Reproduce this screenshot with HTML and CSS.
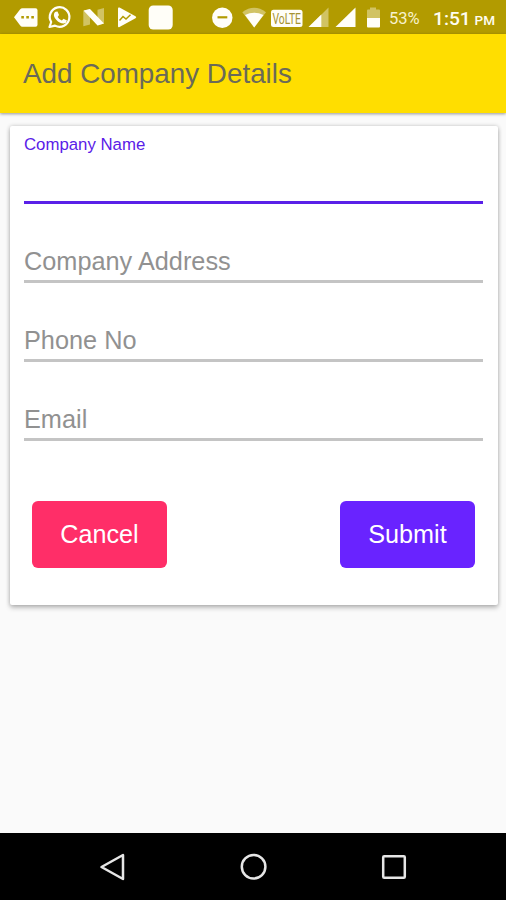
FILE: index.html
```html
<!DOCTYPE html>
<html lang="en">
<head>
<meta charset="utf-8">
<meta name="viewport" content="width=device-width, initial-scale=1">
<title>Add Company Details</title>
<link rel="stylesheet" href="styles.css">
</head>
<body>
<div class="screen">
  <div class="status">
    <svg class="notifications" width="180" height="34" viewBox="0 0 180 34" aria-hidden="true">
      <path class="solid" d="M14 17.3 20 9.5Q21 8.2 22.5 8.2H35.5Q37.5 8.2 37.5 10.2V24.8Q37.5 26.8 35.5 26.8H22.5Q21 26.8 20 25.3Z"/>
      <path class="hole" d="M21.3 16h2.6v2.6h-2.6zM26.3 16h2.6v2.6h-2.6zM31.3 16h2.6v2.6h-2.6z"/>
      <path class="line" d="M49.5 27 51.2 22A9.8 9.8 0 1 1 55 25.6Z"/>
      <path class="solid" d="M55.6 11.8 57.5 11.5 59 15.1 57.7 16.9Q59.2 19.5 61.8 20.6L63.5 18.8 67 20.6Q66.5 23.2 63.6 23.4C58.5 23.5 53 17.5 54 13.9Q54.4 12.4 55.6 11.8Z"/>
      <path class="faint" d="M83.3 11 90 9v15.5l-6.7 1.7zM97.5 9.8l6.5-1.8v15.5l-6.5 2z"/>
      <path class="solid" d="M83.5 10.5 90 9 104 23.5 97.5 25.6Z"/>
      <path class="solid" d="M118 8.5Q118 7 119.5 7.6L135.5 16.2Q137 17.3 135.5 18.3L119.5 27Q118 27.7 118 26.2Z"/>
      <path class="pulse" d="m119.5 20.5 3.5-4 3 2.5 4.5-4.3"/>
      <rect class="solid" x="148.7" y="5.5" width="24" height="24" rx="4.5"/>
    </svg>
    <svg class="signals" width="172" height="34" viewBox="210 0 172 34" aria-hidden="true">
      <circle class="solid" cx="222.3" cy="17.8" r="10.2"/>
      <path class="hole" d="M217.5 16.2h9.8v2.2h-9.8z"/>
      <path class="faint" d="M242.3 12.2Q254.2 3.5 266 12.2L254.2 27.5Z"/>
      <path class="solid" d="M245 15Q254.2 10.5 263.5 15L254.2 27.5Z"/>
      <rect class="solid" x="271" y="9.8" width="31.5" height="17.2" rx="2.5"/>
      <text class="lte" x="272.5" y="24.2" textLength="28.5" lengthAdjust="spacingAndGlyphs">VoLTE</text>
      <path class="faint" d="M328.5 7.5V27H309Z"/>
      <path class="solid" d="M321.3 14.5V27H308.5Z"/>
      <path class="solid" d="M355.5 7.5V27H335.5Z"/>
      <path class="faint" d="M367 10.5Q367 9.5 368 9.5H370V7.5H376V9.5H379Q380 9.5 380 10.5V18H367Z"/>
      <path class="solid" d="M367 18h13v8.5q0 1-1 1h-11q-1 0-1-1z"/>
    </svg>
    <span class="battery">53%</span>
    <span class="clock">1:51 <small>PM</small></span>
  </div>
  <header class="appbar"><h1>Add Company Details</h1></header>
  <main class="content">
    <form class="card">
      <div class="field active"><label>Company Name</label></div>
      <div class="field"><label>Company Address</label></div>
      <div class="field"><label>Phone No</label></div>
      <div class="field"><label>Email</label></div>
      <div class="actions">
        <button class="cancel" type="button">Cancel</button>
        <button class="submit" type="button">Submit</button>
      </div>
    </form>
  </main>
  <nav class="navbar">
    <svg width="28" height="28" viewBox="0 0 28 28"><path d="M24 2V26L2.5 14Z"/></svg>
    <svg width="28" height="28" viewBox="0 0 28 28"><circle cx="13.6" cy="13.7" r="11.8"/></svg>
    <svg width="28" height="28" viewBox="0 0 28 28"><rect x="3.2" y="3.2" width="21.6" height="21.6" rx="1"/></svg>
  </nav>
</div>
</body>
</html>
```
FILE: styles.css
```css
* { box-sizing: border-box; }

body {
  margin: 0;
  font-family: "Liberation Sans", Arial, sans-serif;
  background: #fafafa;
}

.screen {
  display: flex;
  flex-direction: column;
  height: 900px;
}

.status {
  display: flex;
  align-items: center;
  flex: none;
  height: 34px;
  background: #b29b00;
  color: #fffdf0;
  font-family: Roboto, sans-serif;
  white-space: nowrap;
}
.status svg { flex: none; }
.signals { margin-left: 30px; }
.solid { fill: #fffef8; }
.hole { fill: #b29b00; }
.faint { fill: #fffef8; opacity: 0.4; }
.line { fill: none; stroke: #fffef8; stroke-width: 2.2; stroke-linejoin: round; }
.pulse { fill: none; stroke: #b29b00; stroke-width: 1.5; }
.lte { fill: #a59232; font: 15px Roboto, sans-serif; }
.battery { margin: 3px 0 0 7px; width: 44px; font-size: 16.5px; color: #f8f2cc; }
.clock { margin-top: 3px; font-size: 19.2px; font-weight: 500; }
.clock small { margin-left: -1px; font-size: 13.5px; }

.appbar {
  display: flex;
  align-items: center;
  flex: none;
  height: 79px;
  padding-left: 23px;
  background: #ffde00;
  box-shadow: 0 1px 3px rgba(0, 0, 0, 0.4);
}
.appbar h1 {
  margin: 0;
  color: #6b6a58;
  font-size: 27.8px;
  font-weight: 400;
  line-height: 32px;
}

.content { flex: 1; padding: 13px 8px 0 10px; }

.card {
  height: 479px;
  padding: 0 15px 0 14px;
  background: #fff;
  border-radius: 2px;
  box-shadow: 0 3px 5px rgba(0, 0, 0, 0.22), 0 0 4px rgba(0, 0, 0, 0.2);
}
.field {
  display: flex;
  align-items: flex-end;
  height: 79px;
  padding-bottom: 4px;
  border-bottom: 3px solid #c4c4c4;
  color: #919191;
  font-size: 25.3px;
  line-height: 30px;
}
.field.active {
  align-items: flex-start;
  height: 78px;
  padding-top: 9px;
  border-color: #5a20e8;
  color: #5a20e8;
  font-size: 16.8px;
  line-height: 20px;
}

.actions {
  display: flex;
  justify-content: space-between;
  padding: 60px 8px 0;
}
button {
  width: 135px;
  height: 67px;
  padding: 0;
  border: 0;
  border-radius: 6px;
  color: #fff;
  font: 25.2px "Liberation Sans", Arial, sans-serif;
}
.cancel { background: #ff2e68; }
.submit { background: #6923ff; }

.navbar {
  display: flex;
  align-items: center;
  justify-content: space-between;
  flex: none;
  height: 67px;
  padding: 0 98px 0 99px;
  background: #000;
}
.navbar svg { fill: none; stroke: #e6e6e6; stroke-width: 2.5; stroke-linejoin: round; }
```
